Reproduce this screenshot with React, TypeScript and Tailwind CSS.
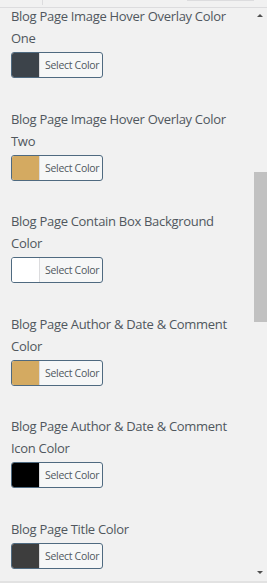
const controls = [
  { label: "Blog Page Image Hover Overlay Color One", color: "bg-[#3c434a]" },
  { label: "Blog Page Image Hover Overlay Color Two", color: "bg-[#d4aa61]" },
  { label: "Blog Page Contain Box Background Color", color: "bg-white" },
  { label: "Blog Page Author & Date & Comment Color", color: "bg-[#d4aa61]" },
  { label: "Blog Page Author & Date & Comment Icon Color", color: "bg-black" },
  { label: "Blog Page Title Color", color: "bg-[#3d3d3d]" },
];

function ColorButton({ color }: { color: string }) {
  return (
    <div className="mt-[3px] flex h-[26px] w-[92px] overflow-hidden rounded-[3px] border border-[#4f6a80] bg-[#f6f7f7]">
      <div className={`w-[28px] shrink-0 border-r border-[#dcdcde] ${color}`} />
      <span className="flex-1 whitespace-nowrap pl-[5px] text-[10.5px] leading-[24px] tracking-[-0.3px] text-[#50575e]">
        Select Color
      </span>
    </div>
  );
}

export default function App() {
  return (
    <div
      className="flex h-[583px] w-[267px] flex-col overflow-hidden bg-[#f1f1f1]"
      style={{ fontFamily: '"Open Sans", "Noto Sans", sans-serif' }}
    >
      {/* top strip, cut off by the scroll */}
      <div className="relative h-[8px] shrink-0 border-b border-[#dcdcde]">
        <div className="absolute left-[42px] top-0 h-[5px] w-px bg-[#dcdcde]" />
        <div className="absolute left-[187px] top-0 h-[1px] w-[67px] bg-[#dcdcde]" />
      </div>

      <div className="flex min-h-0 flex-1 border-b-2 border-[#e2e2e2]">
        <div className="min-w-0 flex-1 overflow-hidden pl-[11px] pr-[14px]">
          <div className="-mt-[3px]">
            {controls.map((c) => (
              <div key={c.label} className="pb-[29.5px]">
                <div className="text-[13px] leading-[22px] tracking-[-0.3px] text-[#50575e]">{c.label}</div>
                <ColorButton color={c.color} />
              </div>
            ))}
          </div>
        </div>

        {/* scrollbar */}
        <div className="relative w-[13px] shrink-0">
          <div className="absolute left-[3px] top-[6px] h-0 w-0 border-x-[3px] border-b-[3px] border-x-transparent border-b-[#505050]" />
          <div className="absolute left-0 right-0 top-[164px] h-[150px] bg-[#c1c1c1]" />
          <div className="absolute bottom-[7px] left-[3px] h-0 w-0 border-x-[3px] border-t-[3px] border-x-transparent border-t-[#505050]" />
        </div>
      </div>
    </div>
  );
}
